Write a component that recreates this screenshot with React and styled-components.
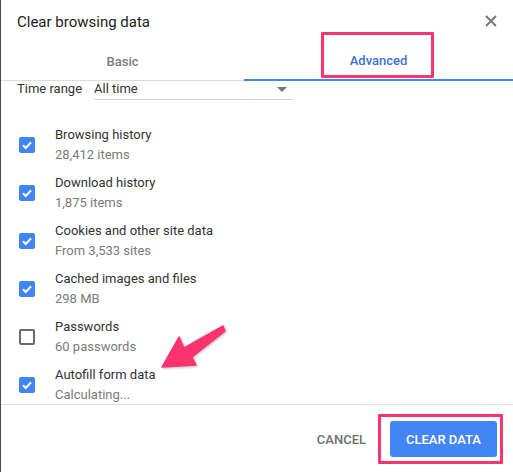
import React from "react";
import styled, { createGlobalStyle } from "styled-components";

const GlobalStyle = createGlobalStyle`
  html, body {
    margin: 0;
    padding: 0;
    background: #fff;
  }
  body {
    font-family: Roboto, "Liberation Sans", Arial, sans-serif;
    -webkit-font-smoothing: antialiased;
  }
`;

const items = [
  { label: "Browsing history", sub: "28,412 items", checked: true },
  { label: "Download history", sub: "1,875 items", checked: true },
  { label: "Cookies and other site data", sub: "From 3,533 sites", checked: true },
  { label: "Cached images and files", sub: "298 MB", checked: true },
  { label: "Passwords", sub: "60 passwords", checked: false },
  { label: "Autofill form data", sub: "Calculating...", checked: true },
];

export default function App() {
  return (
    <>
      <GlobalStyle />
      <Dialog>
        <Header>
          <Title>Clear browsing data</Title>
          <CloseButton aria-label="Close">
            <svg width="12" height="12" viewBox="0 0 12 12">
              <path d="M1 1L11 11M11 1L1 11" stroke="#757575" strokeWidth="1.8" />
            </svg>
          </CloseButton>
        </Header>

        <TabBar>
          <Tab>Basic</Tab>
          <Tab $active>Advanced</Tab>
        </TabBar>

        <Body>
          <TimeRow>
            <TimeLabel>Time range</TimeLabel>
            <Select>
              <span>All time</span>
              <Caret />
            </Select>
          </TimeRow>

          <List>
            {items.map((it) => (
              <Row key={it.label}>
                <Checkbox $checked={it.checked}>
                  {it.checked && (
                    <svg width="12" height="12" viewBox="0 0 12 12">
                      <path d="M2 6.2L4.8 9L10 3.3" fill="none" stroke="#fff" strokeWidth="2" />
                    </svg>
                  )}
                </Checkbox>
                <Texts>
                  <Label>{it.label}</Label>
                  <Sub>{it.sub}</Sub>
                </Texts>
              </Row>
            ))}
          </List>
        </Body>

        <Footer>
          <TextButton>CANCEL</TextButton>
          <PrimaryButton>CLEAR DATA</PrimaryButton>
        </Footer>

        {/* annotations drawn over the dialog */}
        <Highlight $left={320} $top={32} $w={113} $h={46} />
        <Highlight $left={377} $top={414} $w={125} $h={50} />
        <Arrow width="90" height="65" viewBox="0 0 90 65">
          <polygon
            points="11,57 28,27 33,38 72,16 74,21 41,47 45,55"
            fill="#fb3470"
            stroke="#fb3470"
            strokeWidth="1.5"
            strokeLinejoin="round"
          />
        </Arrow>
      </Dialog>
    </>
  );
}

const Dialog = styled.div`
  position: relative;
  width: 513px;
  height: 472px;
  box-sizing: border-box;
  border-left: 1px solid #4a4a4a;
  background: #fff;
  overflow: hidden;
  color: #333;
`;

const Header = styled.div`
  height: 40px;
  box-sizing: border-box;
  padding: 4px 16px 0 16px;
  display: flex;
  align-items: center;
  justify-content: space-between;
`;

const Title = styled.div`
  font-size: 15px;
  color: #212121;
`;

const CloseButton = styled.button`
  border: 0;
  background: transparent;
  padding: 0;
  margin-top: -2px;
  width: 12px;
  height: 12px;
  display: flex;
`;

const TabBar = styled.div`
  display: grid;
  grid-template-columns: 243px 1fr;
`;

const Tab = styled.div`
  height: 41px;
  box-sizing: border-box;
  padding-top: 2px;
  display: flex;
  align-items: center;
  justify-content: center;
  font-size: 13px;
  font-weight: 500;
  color: ${(p) => (p.$active ? "#3b6fd8" : "#7a7a7a")};
  border-bottom: ${(p) => (p.$active ? "2px solid #4285f4" : "1px solid #dcdcdc")};
`;

const Body = styled.div`
  height: 324px;
  box-sizing: border-box;
  padding: 1px 16px 0;
  overflow: hidden;
  border-bottom: 1px solid #e0e0e0;
`;

const TimeRow = styled.div`
  display: flex;
  align-items: flex-start;
  height: 19px;
`;

const TimeLabel = styled.div`
  width: 77px;
  font-size: 13px;
  line-height: 14px;
  color: #333;
`;

const Select = styled.div`
  width: 199px;
  height: 18px;
  box-sizing: border-box;
  padding-right: 6px;
  display: flex;
  justify-content: space-between;
  align-items: flex-start;
  font-size: 13px;
  line-height: 14px;
  color: #333;
  border-bottom: 1px solid #d6d6d6;
`;

const Caret = styled.span`
  margin-top: 5px;
  width: 0;
  height: 0;
  border-left: 5px solid transparent;
  border-right: 5px solid transparent;
  border-top: 5px solid #757575;
`;

const List = styled.div`
  margin-top: 20px;
`;

const Row = styled.div`
  height: 48px;
  display: flex;
  align-items: center;
`;

const Checkbox = styled.span`
  margin-left: 2px;
  width: 16px;
  height: 16px;
  box-sizing: border-box;
  border-radius: 2px;
  display: flex;
  align-items: center;
  justify-content: center;
  background: ${(p) => (p.$checked ? "#4285f4" : "transparent")};
  border: ${(p) => (p.$checked ? "none" : "2px solid #6b6b6b")};
`;

const Texts = styled.div`
  margin-left: 20px;
  font-size: 13px;
  line-height: 20px;
`;

const Label = styled.div`
  color: #333;
`;

const Sub = styled.div`
  color: #7a7a7a;
`;

const Footer = styled.div`
  display: flex;
  justify-content: flex-end;
  align-items: center;
  padding: 16px 16px 0 0;
`;

const TextButton = styled.button`
  border: 0;
  background: transparent;
  padding: 0 8px;
  margin-right: 16px;
  height: 36px;
  font-family: inherit;
  font-size: 13px;
  font-weight: 500;
  color: #6e6e6e;
`;

const PrimaryButton = styled.button`
  border: 0;
  width: 107px;
  height: 36px;
  border-radius: 3px;
  background: #4285f4;
  color: #fff;
  font-family: inherit;
  font-size: 13px;
  font-weight: 500;
`;

const Highlight = styled.div`
  position: absolute;
  left: ${(p) => p.$left}px;
  top: ${(p) => p.$top}px;
  width: ${(p) => p.$w}px;
  height: ${(p) => p.$h}px;
  box-sizing: border-box;
  border: 3px solid #fb3470;
  border-radius: 1px;
`;

const Arrow = styled.svg`
  position: absolute;
  left: 150px;
  top: 310px;
  filter: drop-shadow(1px 1px 1px rgba(0, 0, 0, 0.25));
`;
